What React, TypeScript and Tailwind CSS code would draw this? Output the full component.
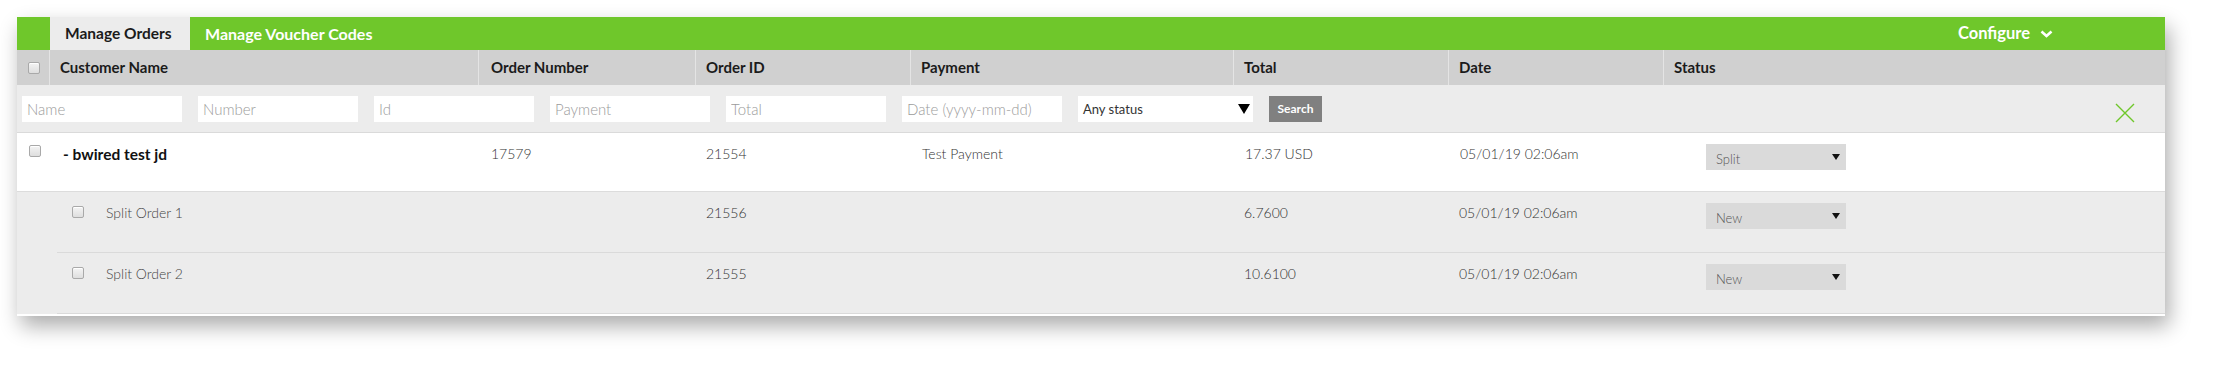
import { useState } from "react";

const cols = "grid grid-cols-[32px_429px_217px_215px_323px_215px_215px_1fr]";
const subCols = "grid grid-cols-[421px_217px_215px_323px_215px_215px_1fr]";

const headers = ["Customer Name", "Order Number", "Order ID", "Payment", "Total", "Date", "Status"];
const filters = ["Name", "Number", "Id", "Payment", "Total", "Date (yyyy-mm-dd)"];

const subOrders = [
  { name: "Split Order 1", id: "21556", total: "6.7600", date: "05/01/19 02:06am", status: "New" },
  { name: "Split Order 2", id: "21555", total: "10.6100", date: "05/01/19 02:06am", status: "New" },
];

function Checkbox() {
  return (
    <span className="block w-[12px] h-[12px] rounded-[2px] border border-[#a9a9a9] bg-gradient-to-b from-[#f4f4f4] to-[#dedede] shadow-[inset_0_1px_0_#fff]" />
  );
}

function StatusSelect({ value }: { value: string }) {
  return (
    <div className="flex items-center justify-between w-[140px] h-[26px] bg-[#dadada] pl-[10px] pr-[6px] text-[13px] text-[#555]">
      <span className="pt-[3px]">{value}</span>
      <svg width="8" height="8" viewBox="0 0 8 8">
        <path d="M0 1 H8 L4 7 Z" fill="#111" />
      </svg>
    </div>
  );
}

export default function App() {
  const [tab] = useState("orders");

  return (
    <div className="min-h-screen bg-white pt-[17px] pl-[17px] font-['Lato',sans-serif]">
      <div className="w-[2148px] bg-white pb-[2px] shadow-[4px_10px_20px_rgba(0,0,0,0.33)]">
        {/* tab bar */}
        <div className="flex items-stretch h-[33px] bg-[#6fc72b]">
          <div className="w-[33px]" />
          <div
            className={`flex items-center w-[140px] pl-[15px] text-[15.5px] font-bold ${
              tab === "orders" ? "bg-[#ececec] text-[#1b1b1b]" : "text-white"
            }`}
          >
            Manage Orders
          </div>
          <div className="flex items-center pl-[15px] text-[16px] font-bold text-white">Manage Voucher Codes</div>
          <div className="flex items-center gap-[10px] ml-auto mr-[112px] text-[16.5px] font-bold text-white">
            Configure
            <svg width="13" height="8" viewBox="0 0 13 8">
              <path d="M1.5 1.5 L6.5 6 L11.5 1.5" fill="none" stroke="#fff" strokeWidth="2.6" />
            </svg>
          </div>
        </div>

        {/* column headers */}
        <div className={`${cols} h-[35px] bg-[#d0d0d0] text-[15px] font-bold text-[#1b1b1b]`}>
          <div className="flex items-center pl-[11px]">
            <Checkbox />
          </div>
          {headers.map((h, i) => (
            <div
              key={h}
              className={`flex items-center border-l border-[#e4e4e4] ${i === 1 ? "pl-[12px]" : "pl-[10px]"}`}
            >
              {h}
            </div>
          ))}
        </div>

        {/* filters */}
        <div className="flex items-start h-[48px] pt-[11px] pl-[5px] gap-[16px] bg-[#ececec] border-b border-[#dadada]">
          {filters.map((f) => (
            <input
              key={f}
              placeholder={f}
              className="w-[160px] h-[26px] bg-white px-[5px] text-[15px] font-light text-[#333] placeholder:text-[#9b9b9b] outline-none"
            />
          ))}
          <div className="flex items-center justify-between w-[175px] h-[26px] bg-white pl-[5px] pr-[3px] text-[13px] text-[#333]">
            <span className="pt-[2px]">Any status</span>
            <svg width="12" height="10" viewBox="0 0 12 10">
              <path d="M0 0 H12 L6 10 Z" fill="#000" />
            </svg>
          </div>
          <button className="w-[53px] h-[26px] bg-[#808080] text-[12px] font-bold text-white">Search</button>
          <svg className="ml-auto mr-[30px] mt-[7px]" width="20" height="20" viewBox="0 0 20 20">
            <path d="M1 1 L19 19 M19 1 L1 19" stroke="#6fc72b" strokeWidth="1.4" />
          </svg>
        </div>

        {/* parent order */}
        <div className={`${cols} h-[59px] bg-white border-b border-[#dcdcdc] text-[14px] leading-[18px] font-light text-[#333]`}>
          <div className="pl-[12px] pt-[12px]">
            <Checkbox />
          </div>
          <div className="pl-[14px] pt-[12px] text-[15.5px] font-bold text-[#111]">- bwired test jd</div>
          <div className="pl-[13px] pt-[12px]">17579</div>
          <div className="pl-[11px] pt-[12px]">21554</div>
          <div className="pl-[12px] pt-[12px]">Test Payment</div>
          <div className="pl-[12px] pt-[12px]">17.37 USD</div>
          <div className="pl-[12px] pt-[12px]">05/01/19 02:06am</div>
          <div className="pl-[43px] pt-[11px]">
            <StatusSelect value="Split" />
          </div>
        </div>

        {/* split orders */}
        {subOrders.map((o) => (
          <div key={o.id} className="flex bg-[#ececec] text-[14px] leading-[18px] font-light text-[#333]">
            <div className="w-[40px] shrink-0" />
            <div className={`${subCols} flex-1 h-[61px] border-b border-[#dadada]`}>
              <div className="flex items-start gap-[22px] pl-[15px] pt-[12px] text-[#444]">
                <span className="pt-[2px]">
                  <Checkbox />
                </span>
                {o.name}
              </div>
              <div />
              <div className="pl-[11px] pt-[12px]">{o.id}</div>
              <div />
              <div className="pl-[11px] pt-[12px]">{o.total}</div>
              <div className="pl-[11px] pt-[12px]">{o.date}</div>
              <div className="pl-[43px] pt-[11px]">
                <StatusSelect value={o.status} />
              </div>
            </div>
          </div>
        ))}
      </div>
    </div>
  );
}
